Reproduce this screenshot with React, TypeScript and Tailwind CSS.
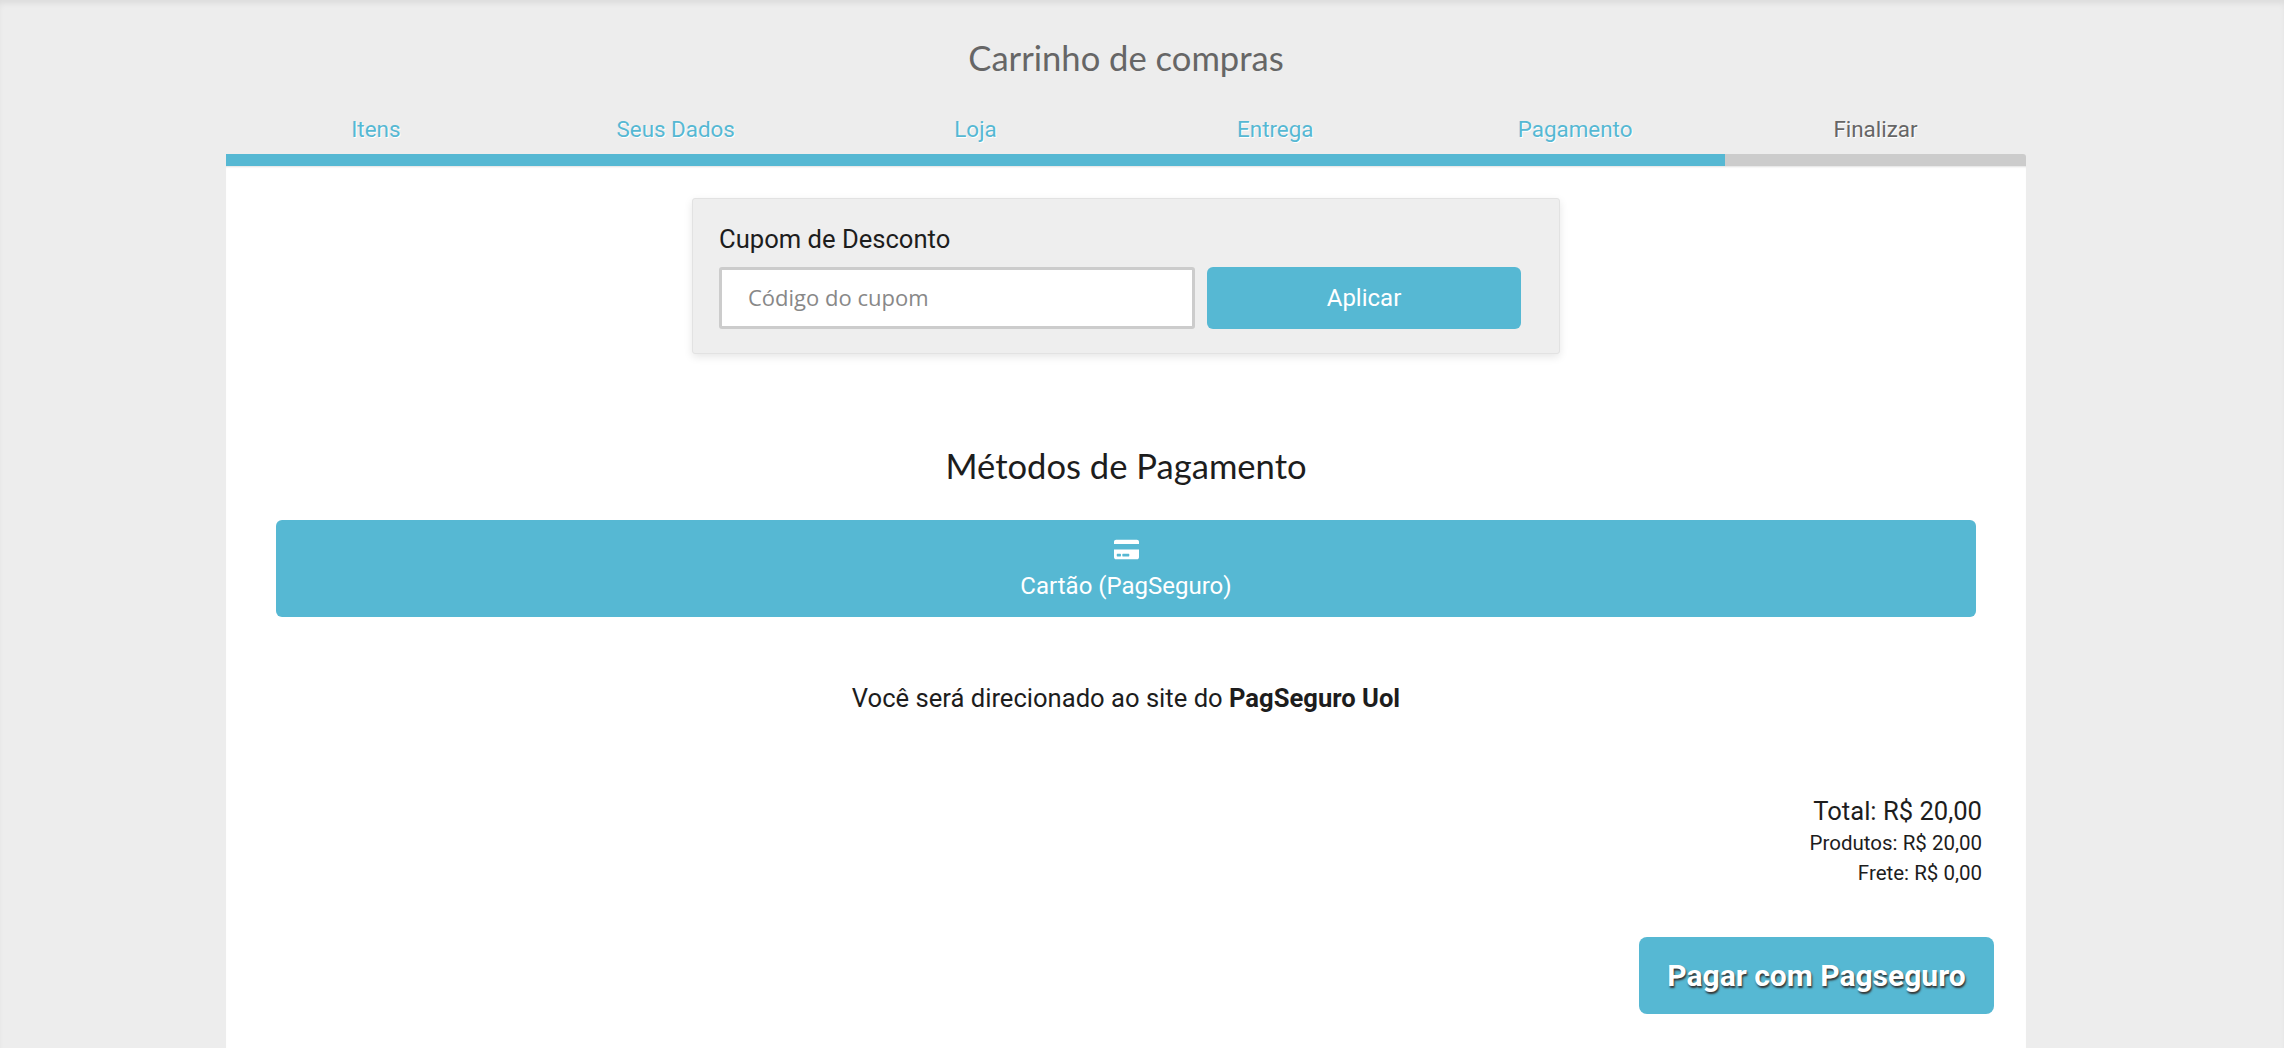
import React from 'react';
import { FaCreditCard } from 'react-icons/fa';

const steps = [
  { label: 'Itens', done: true },
  { label: 'Seus Dados', done: true },
  { label: 'Loja', done: true },
  { label: 'Entrega', done: true },
  { label: 'Pagamento', done: true },
  { label: 'Finalizar', done: false },
];

const App = () => {
  return (
    <div className="h-screen overflow-hidden bg-[#ededed] shadow-[inset_0_5px_6px_-2px_rgba(0,0,0,0.08)] font-['Roboto',sans-serif] text-[#1d1d1d]">
      <div className="ml-[226px] w-[1800px]">
        <h1 className="pt-[34px] text-center font-['Lato',sans-serif] text-[34.6px] leading-[48px] text-[#666]">
          Carrinho de compras
        </h1>

        <div className="mt-[30px] grid grid-cols-[repeat(5,299.8px)_1fr]">
          {steps.map((step) => (
            <div key={step.label} className="flex flex-col">
              <span
                className={
                  step.done
                    ? 'h-[42px] text-center text-[22.4px] leading-[34px] text-[#56b8d3] [text-shadow:1px_1px_0_#fff]'
                    : 'h-[42px] text-center text-[22.4px] leading-[34px] text-[#666] [text-shadow:1px_1px_0_#fff]'
                }
              >
                {step.label}
              </span>
              <div className={step.done ? 'h-[12px] bg-[#56b8d3]' : 'h-[12px] rounded-tr-[3px] bg-[#ccc]'} />
            </div>
          ))}
        </div>

        <div className="h-[900px] bg-white shadow-[inset_0_2px_2px_-1px_rgba(0,0,0,0.12)]">
          <div className="flex justify-center pt-[32px]">
            <div className="h-[156px] w-[868px] rounded-[3px] border border-[#e2e2e2] bg-[#eee] px-[26px] pt-[24px] shadow-[0_3px_8px_rgba(0,0,0,0.1)]">
              <p className="text-[25.6px] leading-[32px]">Cupom de Desconto</p>
              <div className="mt-[12px] flex gap-[12px]">
                <input
                  placeholder="Código do cupom"
                  className="h-[62px] w-[476px] rounded-[3px] border-[3px] border-[#ccc] bg-white px-[26px] pb-[2px] font-['Open_Sans',sans-serif] text-[22px] outline-none placeholder:text-[#888]"
                />
                <button className="h-[62px] w-[314px] rounded-[6px] bg-[#56b8d3] text-[24px] text-white">Aplicar</button>
              </div>
            </div>
          </div>

          <h2 className="mt-[88px] text-center font-['Lato',sans-serif] text-[34.6px] leading-[48px]">
            Métodos de Pagamento
          </h2>

          <div className="mt-[30px] px-[50px]">
            <button className="flex h-[97px] w-full flex-col items-center rounded-[6px] bg-[#56b8d3] pt-[17px] text-white">
              <FaCreditCard size={25} />
              <span className="mt-[8px] text-[24px] leading-[32px]">Cartão (PagSeguro)</span>
            </button>
          </div>

          <p className="mt-[65px] text-center text-[25.6px] leading-[32px]">
            Você será direcionado ao site do <strong className="font-bold">PagSeguro Uol</strong>
          </p>

          <div className="mt-[81px] flex flex-col items-end pr-[44px]">
            <span className="text-[25.6px] leading-[32px]">Total: R$ 20,00</span>
            <span className="mt-[2px] text-[20.5px] leading-[28px]">Produtos: R$ 20,00</span>
            <span className="mt-[2px] text-[20.5px] leading-[28px]">Frete: R$ 0,00</span>
          </div>

          <div className="mt-[50px] flex justify-end pr-[32px]">
            <button className="h-[77px] w-[355px] rounded-[8px] bg-[#56b8d3] text-[30px] font-bold text-white [text-shadow:1px_2px_2px_#333]">
              Pagar com Pagseguro
            </button>
          </div>
        </div>
      </div>
    </div>
  );
};

export default App;
